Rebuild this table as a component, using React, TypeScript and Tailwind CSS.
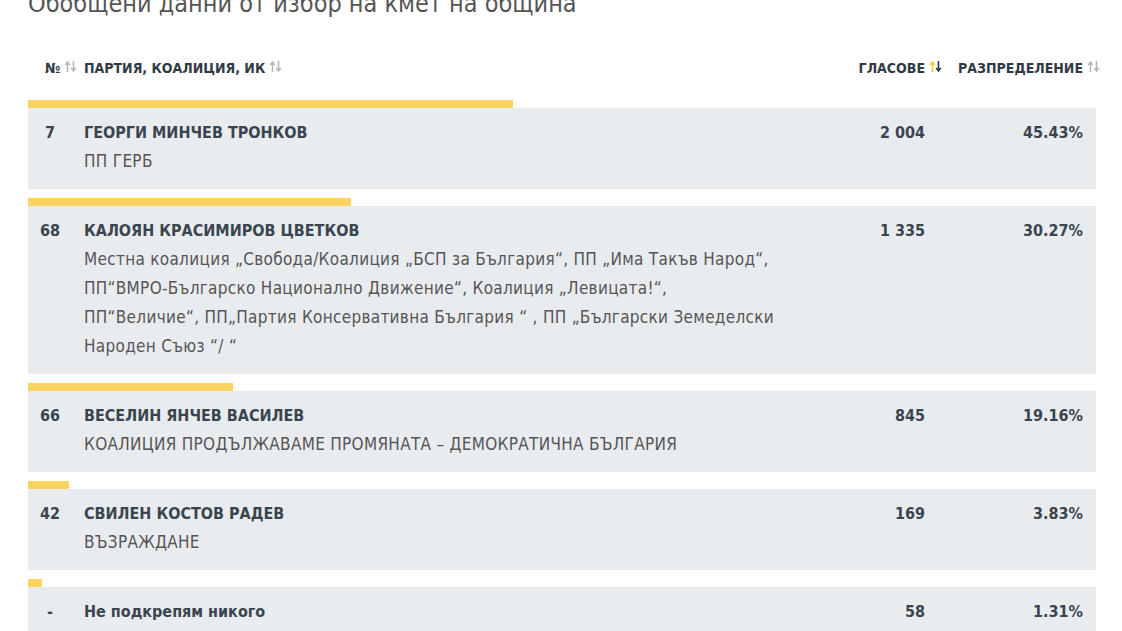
import React from "react";

type Row = {
  no: string;
  name: string;
  party: string[];
  votes: string;
  pct: number;
  plainName?: boolean;
};

const ROWS: Row[] = [
  { no: "7", name: "ГЕОРГИ МИНЧЕВ ТРОНКОВ", party: ["ПП ГЕРБ"], votes: "2 004", pct: 45.43 },
  {
    no: "68",
    name: "КАЛОЯН КРАСИМИРОВ ЦВЕТКОВ",
    party: [
      "Местна коалиция „Свобода/Коалиция „БСП за България“, ПП „Има Такъв Народ“,",
      "ПП“ВМРО-Българско Национално Движение“, Коалиция „Левицата!“,",
      "ПП“Величие“, ПП„Партия Консервативна България “ , ПП „Български Земеделски",
      "Народен Съюз “/ “"
    ],
    votes: "1 335",
    pct: 30.27
  },
  {
    no: "66",
    name: "ВЕСЕЛИН ЯНЧЕВ ВАСИЛЕВ",
    party: ["КОАЛИЦИЯ ПРОДЪЛЖАВАМЕ ПРОМЯНАТА – ДЕМОКРАТИЧНА БЪЛГАРИЯ"],
    votes: "845",
    pct: 19.16
  },
  { no: "42", name: "СВИЛЕН КОСТОВ РАДЕВ", party: ["ВЪЗРАЖДАНЕ"], votes: "169", pct: 3.83 },
  { no: "-", name: "Не подкрепям никого", party: [], votes: "58", pct: 1.31, plainName: true }
];

function SortIcon({ active = false }: { active?: boolean }) {
  return (
    <svg width="13" height="13" viewBox="0 0 13 13" className="inline-block ml-[4px] -mt-[5px]">
      <path d="M3.5 12V2.5M1.2 5l2.3-3 2.3 3" fill="none" stroke={active ? "#f5c842" : "#b5b9bd"} strokeWidth="1.6" />
      <path d="M9.5 1v9.5M7.2 8l2.3 3 2.3-3" fill="none" stroke={active ? "#2f3a44" : "#b5b9bd"} strokeWidth="1.6" />
    </svg>
  );
}

export default function App() {
  return (
    <div
      className="w-[1122px] h-[631px] overflow-hidden bg-white text-[#444]"
      style={{ fontFamily: '"DejaVu Sans Condensed", Roboto, sans-serif' }}
    >
      <h2 className="-mt-[12px] pl-[28px] text-[25px] leading-[32px] text-[#555]">
        Обобщени данни от избор на кмет на община
      </h2>

      <div className="mx-[28px] w-[1068px]">
        <div className="grid grid-cols-[44px_12px_706px_135px_158px_13px] items-center h-[36px] mt-[30px] text-[14px] font-bold uppercase text-[#2f3a44]">
          <div className="pl-[17px] whitespace-nowrap">
            №<SortIcon />
          </div>
          <div />
          <div>
            ПАРТИЯ, КОАЛИЦИЯ, ИК<SortIcon />
          </div>
          <div className="text-right -mr-[17px] whitespace-nowrap">
            ГЛАСОВЕ<SortIcon active />
          </div>
          <div className="text-right -mr-[17px] whitespace-nowrap">
            РАЗПРЕДЕЛЕНИЕ<SortIcon />
          </div>
          <div />
        </div>

        <div className="mt-[14px] flex flex-col gap-[9px]">
          {ROWS.map((r) => (
            <div key={r.no}>
              <div className="h-[8px] bg-[#fbd35e]" style={{ width: `${r.pct}%` }} />
              <div className="grid grid-cols-[44px_12px_706px_135px_158px_13px] bg-[#e9ecef] pt-[10px] pb-[13px] text-[16px] leading-[29px]">
                <div className="text-center font-bold text-[#3a4550]">{r.no}</div>
                <div />
                <div>
                  <div className={r.plainName ? "font-bold text-[#3a4550]" : "font-bold uppercase text-[#3a4550]"}>
                    {r.name}
                  </div>
                  {r.party.map((line) => (
                    <div key={line} className="text-[17px] tracking-[0.3px] text-[#555] whitespace-nowrap">
                      {line}
                    </div>
                  ))}
                </div>
                <div className="text-right font-bold text-[#3a4550]">{r.votes}</div>
                <div className="text-right font-bold text-[#3a4550]">{r.pct.toFixed(2)}%</div>
                <div />
              </div>
            </div>
          ))}
        </div>
      </div>
    </div>
  );
}
